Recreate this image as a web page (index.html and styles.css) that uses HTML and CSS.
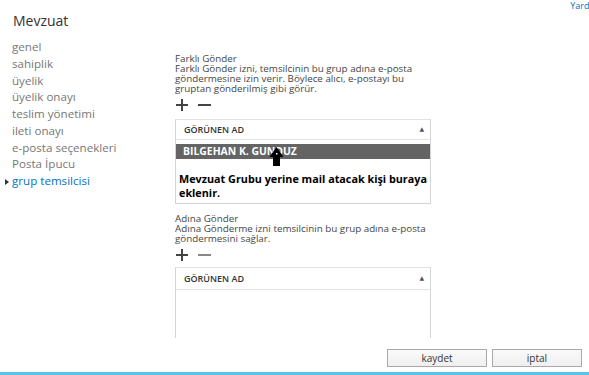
FILE: index.html
```html
<!DOCTYPE html>
<html lang="tr">
<head>
    <meta charset="UTF-8">
    <title>Mevzuat</title>
    <link rel="stylesheet" href="styles.css">
</head>
<body>
    <div class="help"><a href="#">Yardım</a></div>
    <div class="title">Mevzuat</div>

    <div class="layout">
        <ul class="nav">
            <li>genel</li>
            <li>sahiplik</li>
            <li>üyelik</li>
            <li>üyelik onayı</li>
            <li>teslim yönetimi</li>
            <li>ileti onayı</li>
            <li>e-posta seçenekleri</li>
            <li>Posta İpucu</li>
            <li class="active">grup temsilcisi</li>
        </ul>

        <div class="content">
            <!-- Farklı Gönder -->
            <div class="section">
                <div class="label">Farklı Gönder</div>
                <p class="desc">Farklı Gönder izni, temsilcinin bu grup adına e-posta göndermesine izin verir. Böylece alıcı, e-postayı bu gruptan gönderilmiş gibi görür.</p>
                <div class="tools">
                    <span class="plus"></span>
                    <span class="minus"></span>
                </div>
                <div class="grid">
                    <div class="grid-head">GÖRÜNEN AD <span class="sort">▲</span></div>
                    <div class="grid-row selected">BILGEHAN K. GUNDUZ</div>
                    <p class="note">Mevzuat Grubu yerine mail atacak kişi buraya eklenir.</p>
                    <svg class="cursor" width="15" height="20" viewBox="0 0 15 20">
                        <path d="M7.5 0 L14.5 10 L11 10 L11 19 L4 19 L4 10 L0.5 10 Z" fill="#000"/>
                        <rect x="7" y="6" width="1.5" height="1.5" fill="#fff"/>
                    </svg>
                </div>
            </div>

            <!-- Adına Gönder -->
            <div class="section second">
                <div class="label">Adına Gönder</div>
                <p class="desc">Adına Gönderme izni temsilcinin bu grup adına e-posta göndermesini sağlar.</p>
                <div class="tools">
                    <span class="plus"></span>
                    <span class="minus light"></span>
                </div>
                <div class="grid open">
                    <div class="grid-head">GÖRÜNEN AD <span class="sort">▲</span></div>
                    <div class="grid-body"></div>
                </div>
            </div>
        </div>
    </div>

    <div class="footer">
        <button type="button">kaydet</button>
        <button type="button" class="cancel">iptal</button>
    </div>
    <div class="bar"></div>
</body>
</html>
```

FILE: styles.css
```css
body {
    font-family: 'Open Sans', 'DejaVu Sans', sans-serif;
    margin: 0;
    padding: 0;
    width: 589px;
    height: 375px;
    overflow: hidden;
    background-color: #fff;
    color: #333;
    display: flex;
    flex-direction: column;
}
.help {
    height: 12px;
    display: flex;
    justify-content: flex-end;
    font-size: 9px;
    line-height: 12px;
}
.help a {
    color: #0072c6;
    text-decoration: none;
    margin-right: -11px;
}
.title {
    font-size: 14px;
    line-height: 18px;
    color: #333;
    margin-left: 13px;
}
.layout {
    display: flex;
    flex: 1;
}
.nav {
    list-style: none;
    margin: 0;
    padding: 9px 0 0 12px;
    width: 163px;
}
.nav li {
    font-size: 11.6px;
    line-height: 16.75px;
    color: #777;
    position: relative;
}
.nav li.active {
    color: #0072c6;
}
.nav li.active::before {
    content: "";
    position: absolute;
    left: -7px;
    top: 6px;
    border-left: 4px solid #333;
    border-top: 3px solid transparent;
    border-bottom: 3px solid transparent;
}
.content {
    width: 256px;
    padding-top: 24px;
}
.label, .desc {
    font-size: 9.8px;
    line-height: 10px;
    color: #444;
    margin: 0;
}
.tools {
    display: flex;
    gap: 10px;
    height: 12px;
    margin: 5px 0 0 1px;
}
.plus, .minus {
    position: relative;
    width: 12px;
    height: 12px;
}
.plus::before, .plus::after, .minus::before {
    content: "";
    position: absolute;
    background: #444;
}
.plus::before {
    left: 0;
    top: 5px;
    width: 12px;
    height: 2px;
}
.plus::after {
    left: 5px;
    top: 0;
    width: 2px;
    height: 12px;
}
.minus::before {
    left: 0;
    top: 5px;
    width: 13px;
    height: 2px;
}
.minus.light::before {
    background: #888;
}
.grid {
    position: relative;
    margin-top: 8px;
    border: 1px solid #d4d4d4;
    border-top-color: #e2e2e2;
}
.grid-head {
    height: 19px;
    line-height: 19px;
    font-size: 9px;
    font-weight: 600;
    color: #333;
    padding-left: 8px;
    border-bottom: 1px solid #e4e4e4;
    position: relative;
}
.sort {
    position: absolute;
    right: 6px;
    top: 0;
    font-size: 6px;
    color: #555;
}
.grid-row {
    margin: 4px 0 0;
    height: 15px;
    line-height: 15px;
    font-size: 10.4px;
    font-weight: 700;
    color: #fff;
    background-color: #646464;
    padding-left: 7px;
}
.note {
    margin: 13px 0 0 3px;
    font-size: 10.8px;
    line-height: 14px;
    font-weight: 700;
    color: #000;
    padding-bottom: 3px;
}
.cursor {
    position: absolute;
    left: 93px;
    top: 27px;
}
.second {
    margin-top: 10px;
}
.grid.open {
    margin-top: 6px;
    border-bottom: none;
}
.grid.open .grid-head {
    height: 21px;
    line-height: 21px;
}
.grid-head + .grid-body {
    height: 48px;
}
.footer {
    display: flex;
    justify-content: flex-end;
    gap: 5px;
    padding-right: 7px;
    height: 23px;
}
.footer button {
    width: 100px;
    height: 18px;
    padding: 0;
    font-family: 'Open Sans', sans-serif;
    font-size: 10px;
    color: #333;
    background: linear-gradient(#fafafa, #efefef);
    border: 1px solid #a9a9a9;
}
.footer .cancel {
    width: 90px;
}
.bar {
    height: 3px;
    background-color: #5bc3e4;
}
```
